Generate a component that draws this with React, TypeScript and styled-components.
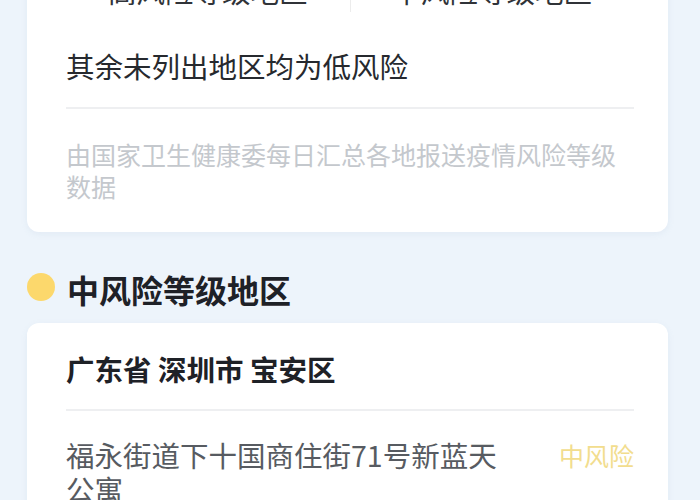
import styled, { createGlobalStyle } from "styled-components";

const GlobalStyle = createGlobalStyle`
  html, body {
    margin: 0;
    padding: 0;
    background: #edf4fb;
    font-family: "Noto Sans CJK SC", "Noto Sans", sans-serif;
  }
  body {
    overflow: hidden;
  }
`;

const Page = styled.div`
  width: 700px;
  height: 500px;
  overflow: hidden;
`;

const Inner = styled.div`
  margin-top: -40px;
  padding: 0 32px 0 27px;
`;

const Card = styled.div`
  background: #ffffff;
  border-radius: 12px;
  padding: 0 34px 0 39px;
  box-shadow: 0 2px 6px rgba(150, 175, 200, 0.12);
`;

const TopRow = styled.div`
  display: grid;
  grid-template-columns: 1fr 1px 1fr;
  height: 52px;
`;

const TopTab = styled.div`
  align-self: end;
  margin-bottom: 1px;
  text-align: center;
  font-size: 28.5px;
  line-height: 40px;
  color: #303338;
`;

const VLine = styled.div`
  width: 1px;
  background: #ececec;
`;

const Note = styled.div`
  font-size: 28.5px;
  line-height: 40px;
  color: #26292e;
  padding: 34px 0 21px;
`;

const HLine = styled.div`
  height: 2px;
  background: #eeeff1;
`;

const Source = styled.div`
  font-size: 25px;
  line-height: 32px;
  color: #c4c8cd;
  padding: 29px 0 30px;
`;

const SectionHead = styled.div`
  display: flex;
  align-items: center;
  gap: 12px;
  margin: 37px 0 14px;
  height: 40px;
`;

const Dot = styled.span<{ $color: string }>`
  width: 28px;
  height: 28px;
  border-radius: 50%;
  background: ${(p) => p.$color};
  margin-top: -4px;
  flex-shrink: 0;
`;

const SectionTitle = styled.h2`
  margin: 0;
  font-size: 32px;
  line-height: 40px;
  font-weight: 700;
  color: #1e2127;
`;

const Region = styled.div`
  font-size: 28.5px;
  line-height: 40px;
  font-weight: 700;
  color: #1e2127;
  padding: 26px 0 20px;
`;

const Entry = styled.div`
  display: flex;
  align-items: flex-start;
  justify-content: space-between;
  gap: 40px;
  padding: 27px 0 20px;
`;

const Address = styled.div`
  font-size: 28.5px;
  line-height: 34px;
  color: #575b61;
  max-width: 445px;
`;

const Level = styled.span<{ $color: string }>`
  font-size: 25px;
  line-height: 34px;
  color: ${(p) => p.$color};
  white-space: nowrap;
`;

export default function App() {
  return (
    <Page>
      <GlobalStyle />
      <Inner>
        <Card>
          <TopRow>
            <TopTab>高风险等级地区</TopTab>
            <VLine />
            <TopTab>中风险等级地区</TopTab>
          </TopRow>
          <Note>其余未列出地区均为低风险</Note>
          <HLine />
          <Source>由国家卫生健康委每日汇总各地报送疫情风险等级数据</Source>
        </Card>

        <SectionHead>
          <Dot $color="#fcd86c" />
          <SectionTitle>中风险等级地区</SectionTitle>
        </SectionHead>

        <Card>
          <Region>广东省 深圳市 宝安区</Region>
          <HLine />
          <Entry>
            <Address>福永街道下十国商住街71号新蓝天公寓</Address>
            <Level $color="#f2dd8e">中风险</Level>
          </Entry>
        </Card>
      </Inner>
    </Page>
  );
}
